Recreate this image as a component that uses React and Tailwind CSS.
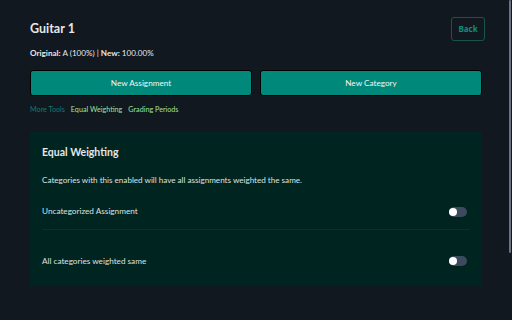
export default function App() {
  const Toggle = () => (
    <div className="w-[18px] h-[10px] rounded-full bg-[#3b4a5c] relative">
      <div className="absolute left-0 top-[1px] w-[8px] h-[8px] rounded-full bg-white" />
    </div>
  );
  return (
    <div className="w-[512px] h-[320px] bg-[#111820] relative overflow-hidden text-[#e5e7eb]" style={{ fontFamily: 'Lato, "Noto Sans", sans-serif' }}>
      <div className="px-[30px] pt-[17px]">
        <div className="flex justify-between items-center">
          <div className="text-[12.5px] font-bold leading-none">Guitar 1</div>
          <button className="w-[34px] h-[24px] mr-[-3px] border border-[#17544c] rounded-[3px] text-[#0f8f7c] text-[8px] font-bold font-['Noto_Sans',sans-serif]">Back</button>
        </div>
        <div className="mt-[6px] text-[8.1px] leading-[12px]">
          <span className="font-bold">Original:</span> A (100%) | <span className="font-bold">New:</span> 100.00%
        </div>
        <div className="mt-[11px] grid grid-cols-2 gap-[8px]">
          <button className="h-[26px] bg-[#00897b] border border-black rounded-[3px] text-[8.2px] text-[#f1f7f5]">New Assignment</button>
          <button className="h-[26px] bg-[#00897b] border border-black rounded-[3px] text-[8.2px] text-[#f1f7f5]">New Category</button>
        </div>
        <div className="mt-[8px] flex gap-[6px] text-[7.2px] leading-[12px]">
          <span className="text-[#0f7c6c]">More Tools</span>
          <span className="text-[#9fe39a]">Equal Weighting</span>
          <span className="text-[#9fe39a]">Grading Periods</span>
        </div>
        <div className="mt-[16px] bg-[#00241f] h-[154px] px-[12px] pt-[12px]">
          <div className="text-[10.5px] font-bold leading-[16px]">Equal Weighting</div>
          <div className="mt-[14px] text-[8.1px] leading-[12px] text-[#dde2e0]">Categories with this enabled will have all assignments weighted the same.</div>
          <div className="mt-[8px] flex items-center justify-between h-[36px] pr-[3px] border-b border-[#0b2f2a]">
            <span className="text-[8.2px] text-[#dde2e0]">Uncategorized Assignment</span>
            <Toggle />
          </div>
          <div className="flex items-center justify-between h-[62px] pr-[3px]">
            <span className="text-[8.2px] text-[#dde2e0]">All categories weighted same</span>
            <Toggle />
          </div>
        </div>
      </div>
      <div className="absolute right-[1px] top-0 w-[2px] h-[253px] bg-[#6b7280] rounded-[1px]" />
    </div>
  );
}
